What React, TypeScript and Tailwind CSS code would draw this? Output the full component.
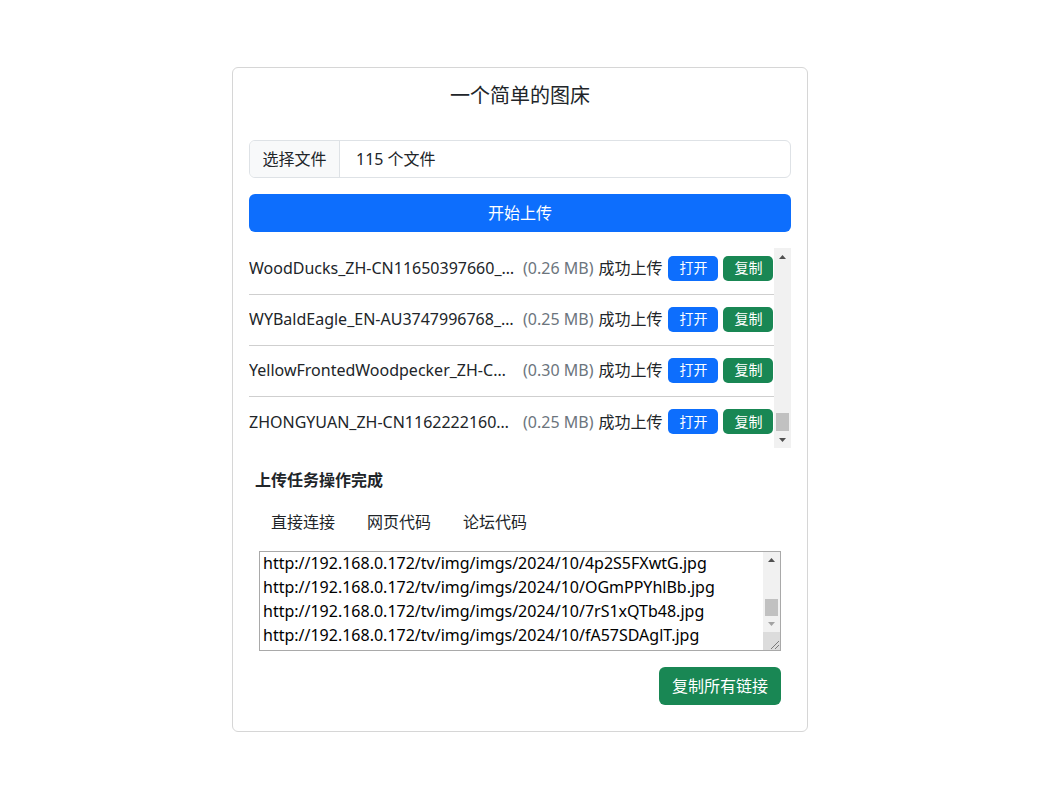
import { useEffect, useRef } from "react";

const FONT = '"Noto Sans", "Noto Sans CJK SC", sans-serif';

const EARLIER = [
  "AlpineLake_ZH-CN10392847561_1920x1080.jpg",
  "AutumnMaple_ZH-CN20938475610_1920x1080.jpg",
  "BambooForest_ZH-CN98237465102_1920x1080.jpg",
  "BeachSunset_EN-US3847562910_1920x1080.jpg",
  "CanyonView_ZH-CN11029384756_1920x1080.jpg",
  "CherryBlossom_JA-JP2938475610_1920x1080.jpg",
  "CoralReef_EN-AU4857203948_1920x1080.jpg",
  "DesertDunes_ZH-CN12938475620_1920x1080.jpg",
  "EagleNest_EN-CA3948576201_1920x1080.jpg",
  "FjordMorning_ZH-CN10293847561_1920x1080.jpg",
  "GoldenGate_EN-US2837465019_1920x1080.jpg",
  "GreatWall_ZH-CN11938475602_1920x1080.jpg",
  "HarborLights_EN-GB3847569201_1920x1080.jpg",
  "IcebergBay_ZH-CN12039485761_1920x1080.jpg",
  "JadeMountain_ZH-CN10928374650_1920x1080.jpg",
  "KoalaTree_EN-AU3928475610_1920x1080.jpg",
  "LavenderField_ZH-CN11203948576_1920x1080.jpg",
  "MilkyWay_EN-US2938475601_1920x1080.jpg",
  "NorthernLights_ZH-CN10394857620_1920x1080.jpg",
  "OldTown_ZH-CN11293847560_1920x1080.jpg",
  "PandaCub_ZH-CN12938475601_1920x1080.jpg",
  "PineForest_EN-CA3847562019_1920x1080.jpg",
  "QinghaiLake_ZH-CN10283947561_1920x1080.jpg",
  "RedFox_EN-GB2938475610_1920x1080.jpg",
  "RiceTerraces_ZH-CN11029384765_1920x1080.jpg",
  "SnowOwl_EN-US3948576120_1920x1080.jpg",
  "StoneBridge_ZH-CN12093847561_1920x1080.jpg",
  "TeaGarden_ZH-CN10938475620_1920x1080.jpg",
  "TigerLeaping_ZH-CN11839475620_1920x1080.jpg",
  "UluruDawn_EN-AU2847563910_1920x1080.jpg",
  "VolcanoIsland_ZH-CN12847563910_1920x1080.jpg",
  "WaterfallMist_ZH-CN10293847566_1920x1080.jpg",
];

const FILES = [
  ...EARLIER.map((name, i) => ({ name, size: (0.2 + ((i * 7) % 12) / 100).toFixed(2) })),
  { name: "WoodDucks_ZH-CN11650397660_1920x1080.jpg", size: "0.26" },
  { name: "WYBaldEagle_EN-AU3747996768_1920x1080.jpg", size: "0.25" },
  { name: "YellowFrontedWoodpecker_ZH-CN10394857261_1920x1080.jpg", size: "0.30" },
  { name: "ZHONGYUAN_ZH-CN11622221605_1920x1080.jpg", size: "0.25" },
];

const CHARS = "abcdefghijkmnpqrstuvwxyzABCDEFGHJKLMNPQRSTUVWXYZ0123456789";
const URLS = Array.from({ length: 115 }, (_, i) => {
  let id = "";
  for (let k = 0; k < 10; k++) id += CHARS[(i * 31 + k * 17 + i * k * 7) % CHARS.length];
  return `http://192.168.0.172/tv/img/imgs/2024/10/${id}.jpg`;
});
URLS[78] = "http://192.168.0.172/tv/img/imgs/2024/10/4p2S5FXwtG.jpg";
URLS[79] = "http://192.168.0.172/tv/img/imgs/2024/10/OGmPPYhlBb.jpg";
URLS[80] = "http://192.168.0.172/tv/img/imgs/2024/10/7rS1xQTb48.jpg";
URLS[81] = "http://192.168.0.172/tv/img/imgs/2024/10/fA57SDAglT.jpg";

// classic scrollbar arrow
function Arrow({ up, color = "#505050" }: { up?: boolean; color?: string }) {
  return (
    <svg width="7" height="4" viewBox="0 0 7 4">
      <polygon points={up ? "0,4 7,4 3.5,0" : "0,0 7,0 3.5,4"} fill={color} />
    </svg>
  );
}

function FileRow({ name, size, last }: { name: string; size: string; last: boolean }) {
  return (
    <div
      className={
        last
          ? "flex items-center h-[51px] pb-[2px] text-[16px] leading-[24px]"
          : "flex items-center h-[51px] pb-[2px] border-b border-[#cfcfcf] text-[16px] leading-[24px]"
      }
    >
      <span className="w-[266px] shrink-0 truncate text-[#212529]">{name}</span>
      <span className="ml-[8px] text-[#6c757d] whitespace-nowrap">({size} MB)</span>
      <span className="ml-[5px] text-[#212529] whitespace-nowrap">成功上传</span>
      <button className="ml-[6px] w-[50px] h-[25px] shrink-0 rounded-[5px] bg-[#0d6efd] text-white text-[14px] leading-none">
        打开
      </button>
      <button className="ml-[5px] w-[50px] h-[25px] shrink-0 rounded-[5px] bg-[#198754] text-white text-[14px] leading-none">
        复制
      </button>
    </div>
  );
}

export default function App() {
  const listRef = useRef<HTMLDivElement>(null);
  const areaRef = useRef<HTMLTextAreaElement>(null);

  useEffect(() => {
    if (listRef.current) listRef.current.scrollTop = listRef.current.scrollHeight;
    if (areaRef.current) areaRef.current.scrollTop = 78 * 24 + 1;
  }, []);

  return (
    <div className="min-h-[798px] bg-white pt-[67px] text-[#212529]" style={{ fontFamily: FONT }}>
      <div className="ml-[232px] w-[576px] h-[665px] border border-[#d6d6d6] rounded-[6px] px-[16px] pt-[16px]">
        <h4 className="text-center text-[20px] leading-[24px] font-normal">一个简单的图床</h4>

        {/* file picker */}
        <div className="mt-[32px] flex h-[38px] border border-[#dee2e6] rounded-[6px] overflow-hidden text-[16px]">
          <label className="w-[90px] shrink-0 flex items-center justify-center bg-[#f8f9fa] border-r border-[#dee2e6]">
            选择文件
          </label>
          <div className="flex items-center pl-[16px]">115 个文件</div>
        </div>

        <button className="mt-[16px] w-full h-[38px] rounded-[6px] bg-[#0d6efd] text-white text-[16px]">
          开始上传
        </button>

        {/* upload list, scrolled to the end */}
        <div className="mt-[16px] h-[200px] flex">
          <div ref={listRef} className="flex-1 min-w-0 overflow-hidden">
            {FILES.map((f, i) => (
              <FileRow key={f.name} name={f.name} size={f.size} last={i === FILES.length - 1} />
            ))}
          </div>
          <div className="w-[17px] shrink-0 bg-[#f1f1f1] flex flex-col">
            <div className="h-[17px] flex items-center justify-center">
              <Arrow up />
            </div>
            <div className="flex-1 flex flex-col justify-end px-[2px]">
              <div className="h-[18px] bg-[#c1c1c1]" />
            </div>
            <div className="h-[17px] flex items-center justify-center">
              <Arrow />
            </div>
          </div>
        </div>

        {/* result */}
        <div className="mt-[20px] px-[6px]">
          <div className="text-[16px] leading-[24px] font-bold">上传任务操作完成</div>
          <nav className="mt-[10px] flex text-[16px] leading-[24px]">
            <a className="px-[16px] py-[8px] text-[#212529]">直接连接</a>
            <a className="px-[16px] py-[8px] text-[#212529]">网页代码</a>
            <a className="px-[16px] py-[8px] text-[#212529]">论坛代码</a>
          </nav>
        </div>
        <div className="mx-[10px] mt-[9px]">
          <div className="flex h-[100px] border border-[#a9a9a9]">
            <textarea
              ref={areaRef}
              readOnly
              value={URLS.join("\n")}
              className="flex-1 min-w-0 h-full px-[3px] py-[0px] text-[16px] leading-[24px] text-black outline-none overflow-hidden resize-none whitespace-pre"
              style={{ fontFamily: FONT }}
            />
            <div className="w-[17px] shrink-0 bg-[#f1f1f1] flex flex-col">
              <div className="h-[16px] flex items-center justify-center">
                <Arrow up />
              </div>
              <div className="h-[48px] flex flex-col justify-end px-[2px]">
                <div className="h-[17px] bg-[#c1c1c1]" />
              </div>
              <div className="h-[16px] flex items-center justify-center">
                <Arrow color="#a3a3a3" />
              </div>
              <div className="flex-1 bg-[#dcdcdc] flex items-end justify-end">
                <svg width="12" height="12" viewBox="0 0 12 12">
                  <line x1="11" y1="3" x2="3" y2="11" stroke="#7a7a7a" strokeWidth="1" />
                  <line x1="11" y1="7" x2="7" y2="11" stroke="#7a7a7a" strokeWidth="1" />
                </svg>
              </div>
            </div>
          </div>
          <div className="mt-[16px] flex justify-end">
            <button className="h-[38px] px-[13px] rounded-[6px] bg-[#198754] text-white text-[16px]">
              复制所有链接
            </button>
          </div>
        </div>
      </div>
    </div>
  );
}
